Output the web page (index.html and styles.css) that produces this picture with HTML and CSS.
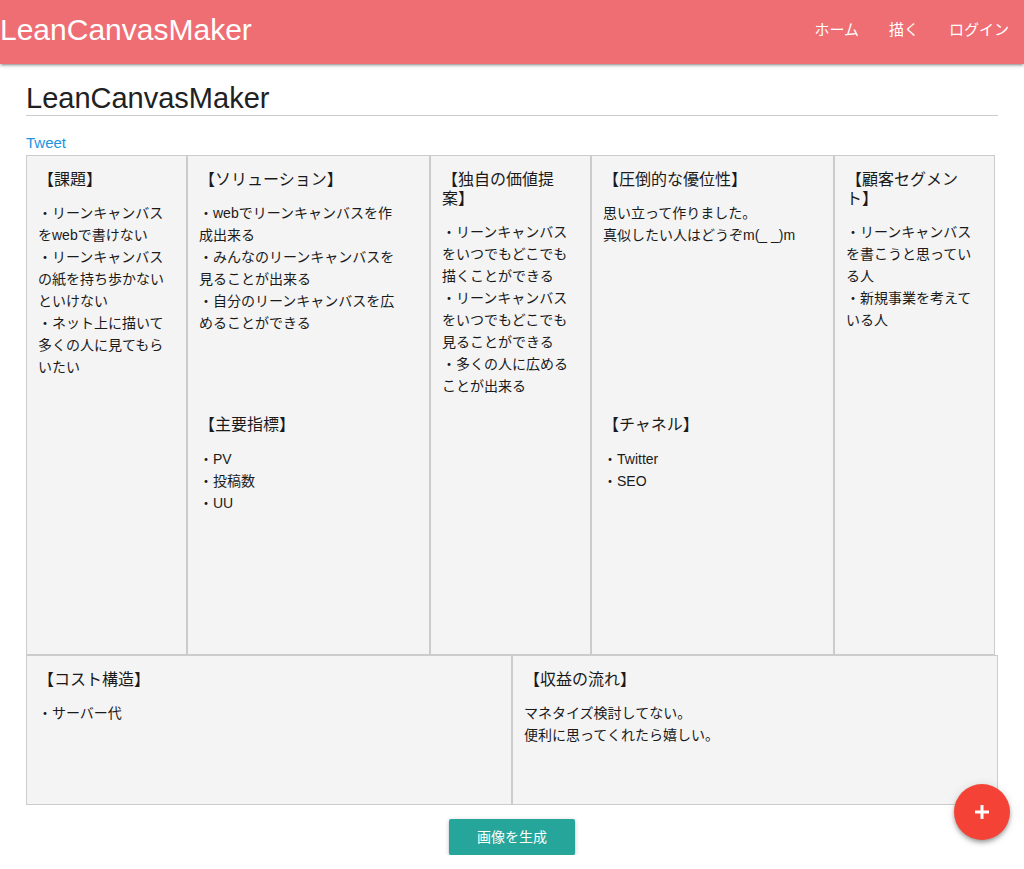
FILE: index.html
```html
<!DOCTYPE html>
<html lang="ja">
<head>
<meta charset="utf-8">
<title>LeanCanvasMaker</title>
<link rel="stylesheet" href="styles.css">
</head>
<body>
<nav class="nav">
  <a class="brand" href="#">LeanCanvasMaker</a>
  <ul class="nav-links">
    <li><a href="#">ホーム</a></li>
    <li><a href="#">描く</a></li>
    <li><a href="#">ログイン</a></li>
  </ul>
</nav>

<main class="container">
  <h1 class="title">LeanCanvasMaker</h1>
  <a class="tweet" href="#">Tweet</a>

  <div class="canvas">
    <div class="row-top">
      <div class="box">
        <section class="sec">
          <h2 class="sec-title">【課題】</h2>
          <p class="sec-body">・リーンキャンバスをwebで書けない<br>・リーンキャンバスの紙を持ち歩かないといけない<br>・ネット上に描いて多くの人に見てもらいたい</p>
        </section>
      </div>
      <div class="box split">
        <section class="sec sec-upper">
          <h2 class="sec-title">【ソリューション】</h2>
          <p class="sec-body">・webでリーンキャンバスを作成出来る<br>・みんなのリーンキャンバスを見ることが出来る<br>・自分のリーンキャンバスを広めることができる</p>
        </section>
        <section class="sec sec-lower">
          <h2 class="sec-title">【主要指標】</h2>
          <p class="sec-body">・PV<br>・投稿数<br>・UU</p>
        </section>
      </div>
      <div class="box">
        <section class="sec">
          <h2 class="sec-title">【独自の価値提案】</h2>
          <p class="sec-body">・リーンキャンバスをいつでもどこでも描くことができる<br>・リーンキャンバスをいつでもどこでも見ることができる<br>・多くの人に広めることが出来る</p>
        </section>
      </div>
      <div class="box split">
        <section class="sec sec-upper">
          <h2 class="sec-title">【圧倒的な優位性】</h2>
          <p class="sec-body">思い立って作りました。<br>真似したい人はどうぞm(_ _)m</p>
        </section>
        <section class="sec sec-lower">
          <h2 class="sec-title">【チャネル】</h2>
          <p class="sec-body">・Twitter<br>・SEO</p>
        </section>
      </div>
      <div class="box">
        <section class="sec">
          <h2 class="sec-title">【顧客セグメント】</h2>
          <p class="sec-body">・リーンキャンバスを書こうと思っている人<br>・新規事業を考えている人</p>
        </section>
      </div>
    </div>
    <div class="row-bottom">
      <div class="box">
        <section class="sec">
          <h2 class="sec-title">【コスト構造】</h2>
          <p class="sec-body">・サーバー代</p>
        </section>
      </div>
      <div class="box">
        <section class="sec">
          <h2 class="sec-title">【収益の流れ】</h2>
          <p class="sec-body">マネタイズ検討してない。<br>便利に思ってくれたら嬉しい。</p>
        </section>
      </div>
    </div>
  </div>

  <div class="actions">
    <button class="btn" type="button">画像を生成</button>
  </div>
</main>

<a class="fab" href="#" aria-label="追加">
  <svg width="14" height="14" viewBox="0 0 14 14" aria-hidden="true">
    <rect x="5.5" y="0" width="3" height="14" fill="#fff"/>
    <rect x="0" y="5.5" width="14" height="3" fill="#fff"/>
  </svg>
</a>
</body>
</html>
```

FILE: styles.css
```css
* {
  box-sizing: border-box;
}

html, body {
  margin: 0;
  padding: 0;
}

body {
  font-family: "Liberation Sans", "Noto Sans CJK JP", sans-serif;
  color: #1a1a1a;
  background: #fff;
  text-spacing-trim: space-all;
}

a {
  text-decoration: none;
}

.nav {
  height: 64px;
  background: #ef6e73;
  display: flex;
  align-items: center;
  justify-content: space-between;
  box-shadow: 0 2px 2px 0 rgba(0,0,0,.14), 0 3px 1px -2px rgba(0,0,0,.12), 0 1px 5px 0 rgba(0,0,0,.2);
  position: relative;
  z-index: 2;
}

.brand {
  color: #fff;
  font-size: 30px;
  line-height: 60px;
  height: 64px;
}

.nav-links {
  list-style: none;
  margin: 0;
  padding: 0;
  display: flex;
  height: 64px;
}

.nav-links a {
  display: block;
  color: #fff;
  font-size: 15px;
  line-height: 60px;
  padding: 0 15px;
}

.container {
  margin: 0 26px;
}

.title {
  font-size: 29px;
  font-weight: normal;
  line-height: 34px;
  margin: 17px 0 0;
  border-bottom: 1px solid #ccc;
  color: #212121;
}

.tweet {
  display: block;
  width: max-content;
  margin-top: 17px;
  font-size: 15px;
  line-height: 20px;
  color: #1b95e0;
}

.canvas {
  margin-top: 2px;
}

.row-top {
  display: grid;
  grid-template-columns: 161px 243px 161px 243px 161px;
  height: 500px;
}

.row-bottom {
  display: grid;
  grid-template-columns: 1fr 1fr;
  height: 150px;
}

.box {
  background: #f4f4f4;
  border: 1px solid #ccc;
  display: flex;
  flex-direction: column;
  min-width: 0;
}

.sec {
  padding: 14px 21px 0 11px;
}

.split .sec {
  padding-right: 26px;
}

.sec-upper {
  height: 245px;
}

.sec-lower {
  flex: 1;
}

.sec-title {
  font-size: 16px;
  font-weight: normal;
  line-height: 19px;
  margin: 0 0 13px;
}

.sec-lower .sec-title {
  margin-bottom: 14px;
}

.sec-body {
  font-size: 14px;
  line-height: 22px;
  margin: 0;
}

.actions {
  display: flex;
  justify-content: center;
  margin-top: 14px;
}

.btn {
  height: 36px;
  padding: 0 28px;
  border: none;
  border-radius: 2px;
  background: #26a69a;
  color: #fff;
  font-family: "Liberation Sans", "Noto Sans CJK JP", sans-serif;
  font-size: 14px;
  line-height: 36px;
  box-shadow: 0 2px 2px 0 rgba(0,0,0,.14), 0 3px 1px -2px rgba(0,0,0,.12), 0 1px 5px 0 rgba(0,0,0,.2);
  cursor: pointer;
}

.fab {
  position: fixed;
  right: 14px;
  bottom: 29px;
  width: 56px;
  height: 56px;
  border-radius: 50%;
  background: #f44336;
  display: flex;
  align-items: center;
  justify-content: center;
  box-shadow: 0 4px 5px 0 rgba(0,0,0,.14), 0 1px 10px 0 rgba(0,0,0,.12), 0 2px 4px -1px rgba(0,0,0,.3);
}
```
